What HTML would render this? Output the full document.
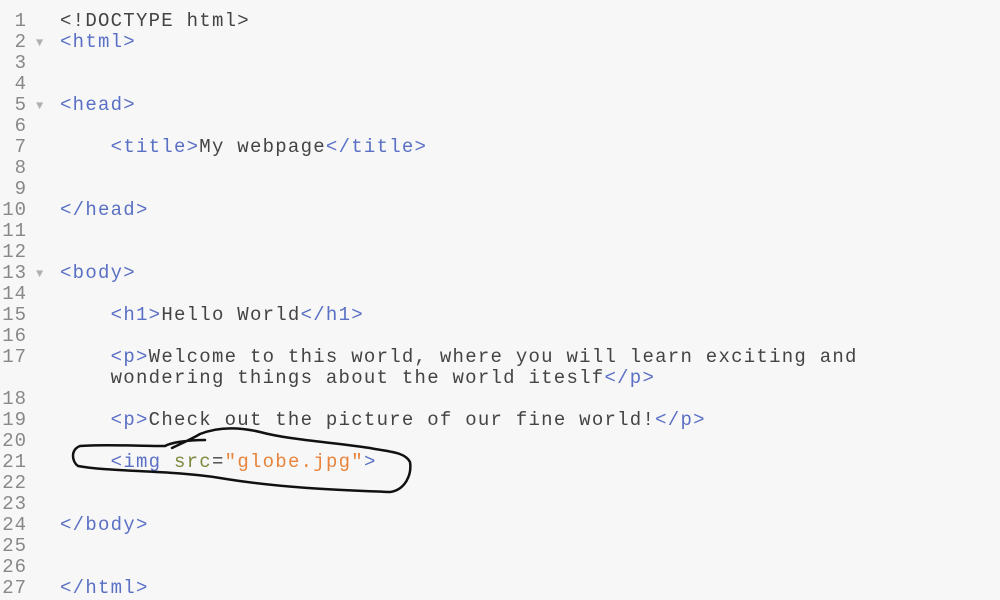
<!DOCTYPE html>
<html><head><style>
body{margin:0;width:1000px;height:600px;background:#f7f7f7;overflow:hidden;position:relative;font-family:"Liberation Mono",monospace;font-size:19px;letter-spacing:1.26px;color:#444}
.r{position:absolute;left:0;height:21px;line-height:21px;white-space:pre}
.n{position:absolute;left:0;width:27px;text-align:right;color:#888;letter-spacing:1px;font-size:19px}
.a{position:absolute;left:36px;top:1px;color:#b0b0b0;font-size:12px;letter-spacing:0}
.c{position:absolute;left:60px}
.t{color:#5a70c4}.at{color:#7d8b3c}.s{color:#e8843c}
</style></head><body>
<div class="r" style="top:11px"><span class="n">1</span><span class="c">&lt;!DOCTYPE html&gt;</span></div>
<div class="r" style="top:32px"><span class="n">2</span><span class="a">▼</span><span class="c t">&lt;html&gt;</span></div>
<div class="r" style="top:53px"><span class="n">3</span></div>
<div class="r" style="top:74px"><span class="n">4</span></div>
<div class="r" style="top:95px"><span class="n">5</span><span class="a">▼</span><span class="c t">&lt;head&gt;</span></div>
<div class="r" style="top:116px"><span class="n">6</span></div>
<div class="r" style="top:137px"><span class="n">7</span><span class="c">    <span class="t">&lt;title&gt;</span>My webpage<span class="t">&lt;/title&gt;</span></span></div>
<div class="r" style="top:158px"><span class="n">8</span></div>
<div class="r" style="top:179px"><span class="n">9</span></div>
<div class="r" style="top:200px"><span class="n">10</span><span class="c t">&lt;/head&gt;</span></div>
<div class="r" style="top:221px"><span class="n">11</span></div>
<div class="r" style="top:242px"><span class="n">12</span></div>
<div class="r" style="top:263px"><span class="n">13</span><span class="a">▼</span><span class="c t">&lt;body&gt;</span></div>
<div class="r" style="top:284px"><span class="n">14</span></div>
<div class="r" style="top:305px"><span class="n">15</span><span class="c">    <span class="t">&lt;h1&gt;</span>Hello World<span class="t">&lt;/h1&gt;</span></span></div>
<div class="r" style="top:326px"><span class="n">16</span></div>
<div class="r" style="top:347px"><span class="n">17</span><span class="c">    <span class="t">&lt;p&gt;</span>Welcome to this world, where you will learn exciting and</span></div>
<div class="r" style="top:368px"><span class="c">    wondering things about the world iteslf<span class="t">&lt;/p&gt;</span></span></div>
<div class="r" style="top:389px"><span class="n">18</span></div>
<div class="r" style="top:410px"><span class="n">19</span><span class="c">    <span class="t">&lt;p&gt;</span>Check out the picture of our fine world!<span class="t">&lt;/p&gt;</span></span></div>
<div class="r" style="top:431px"><span class="n">20</span></div>
<div class="r" style="top:452px"><span class="n">21</span><span class="c">    <span class="t">&lt;img</span> <span class="at">src</span>=<span class="s">"globe.jpg"</span><span class="t">&gt;</span></span></div>
<div class="r" style="top:473px"><span class="n">22</span></div>
<div class="r" style="top:494px"><span class="n">23</span></div>
<div class="r" style="top:515px"><span class="n">24</span><span class="c t">&lt;/body&gt;</span></div>
<div class="r" style="top:536px"><span class="n">25</span></div>
<div class="r" style="top:557px"><span class="n">26</span></div>
<div class="r" style="top:578px"><span class="n">27</span><span class="c t">&lt;/html&gt;</span></div>
<svg width="1000" height="600" style="position:absolute;left:0;top:0" fill="none" stroke="#111" stroke-width="2.5" stroke-linecap="round">
<path d="M205 440 C185 440 170 443 165 446 C140 446 100 444 80 446 C70 450 72 462 78 466 C110 472 170 470 220 478 C280 488 340 490 390 492 C405 490 412 475 410 462 C405 452 390 452 370 448 C330 442 290 440 260 432 C235 426 215 428 200 434 C190 440 180 444 172 448"/>
</svg>
</body></html>
